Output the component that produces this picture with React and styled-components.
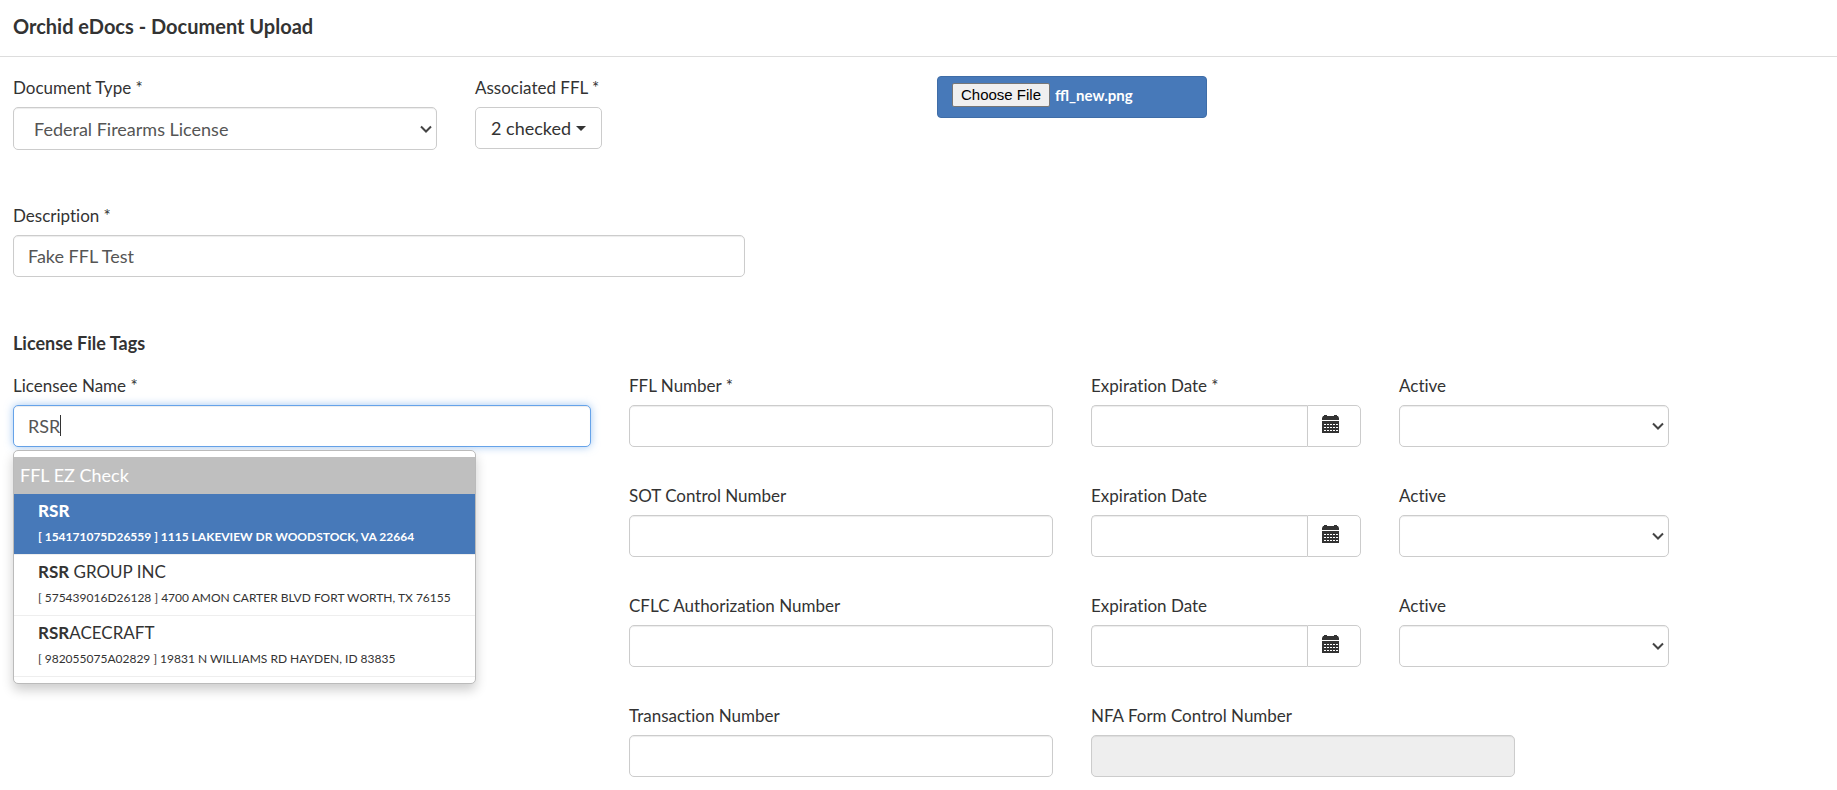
import React, { useState } from "react"
import styled, { createGlobalStyle, css } from "styled-components"

const GlobalStyle = createGlobalStyle`
  *,
  *::before,
  *::after {
    box-sizing: border-box;
  }
  body {
    margin: 0;
    background: #fff;
    color: #333;
    font-family: Lato, "Open Sans", "Liberation Sans", sans-serif;
    font-size: 17px;
    font-variant-ligatures: none;
    line-height: 24px;
  }
  button,
  input,
  select {
    font: inherit;
  }
`

const Header = styled.header`
  padding: 12px 13px 16px;
  border-bottom: 1px solid #ddd;
  h1 {
    margin: 0;
    font-size: 20px;
    font-weight: 700;
    line-height: 28px;
  }
`

const Form = styled.form`
  padding: 19px 14px 10px 13px;
`

const Row = styled.div`
  display: grid;
  grid-template-columns: repeat(12, minmax(0, 1fr));
  column-gap: 38px;
  margin-bottom: ${(props) => (props.$last ? 0 : props.$loose ? 54 : 37)}px;
`

const Column = styled.div`
  position: relative;
  grid-column: ${(props) => (props.$start ? `${props.$start} / ` : "")} span
    ${(props) => props.$span};
`

const Label = styled.label`
  display: block;
  margin-bottom: 7px;
`

const SectionTitle = styled.h2`
  margin: 0 0 19px;
  font-size: 18px;
  font-weight: 700;
  line-height: 24px;
`

const control = css`
  display: block;
  width: 100%;
  height: 42px;
  border: 1px solid #ccc;
  border-radius: 5px;
  background: #fff;
  color: #555;
  font-size: 18px;
  box-shadow: inset 0 1px 1px rgba(0, 0, 0, 0.075);
`

const Input = styled.input`
  ${control}
  padding: 0 14px;
  &:disabled {
    background: #eee;
  }
`

const SearchInput = styled(Input)`
  border-color: #66a3e9;
  outline: 0;
  caret-color: transparent;
  box-shadow: inset 0 1px 1px rgba(0, 0, 0, 0.075),
    0 0 9px rgba(102, 163, 233, 0.6);
`

const SearchBox = styled.div`
  position: relative;
`

const Caret = styled.span`
  position: absolute;
  top: 10px;
  left: 47px;
  width: 1px;
  height: 21px;
  background: #333;
`

const SelectBox = styled.div`
  display: grid;
  align-items: center;
  > * {
    grid-area: 1 / 1;
  }
  svg {
    justify-self: end;
    margin-right: 5px;
    pointer-events: none;
  }
`

const SelectControl = styled.select`
  ${control}
  height: ${(props) => (props.$tall ? 43 : 42)}px;
  padding: 0 20px;
  appearance: none;
`

const CheckedButton = styled.button`
  display: flex;
  align-items: center;
  gap: 5px;
  height: 42px;
  padding: 0 15px;
  border: 1px solid #ccc;
  border-radius: 5px;
  background: #fff;
  color: #333;
  font-size: 18px;
  &::after {
    content: "";
    border-top: 5px solid;
    border-right: 5px solid transparent;
    border-left: 5px solid transparent;
  }
`

const FileBox = styled.label`
  display: flex;
  align-items: center;
  height: 42px;
  padding: 0 14px 4px;
  border: 1px solid #3f6da7;
  border-radius: 4px;
  background: #4779b9;
  color: #fff;
  font-size: 15px;
  font-variant-ligatures: normal;
  font-weight: 700;
  input {
    position: absolute;
    width: 1px;
    height: 1px;
    opacity: 0;
  }
`

const FileButton = styled.span`
  margin-right: 5px;
  padding: 0 8px;
  border: 1px solid #767676;
  border-radius: 2px;
  background: #efefef;
  color: #000;
  font-family: "Liberation Sans", Arial, sans-serif;
  font-size: 15px;
  font-weight: 400;
  line-height: 22px;
`

const DateGroup = styled.div`
  display: flex;
  ${Input} {
    flex: 1;
    min-width: 0;
    border-right: 0;
    border-radius: 5px 0 0 5px;
  }
`

const CalendarButton = styled.button`
  width: 54px;
  height: 42px;
  padding: 0 0 4px 14px;
  border: 1px solid #ccc;
  border-radius: 0 5px 5px 0;
  background: #fff;
  color: #333;
  svg {
    display: block;
  }
`

const Menu = styled.ul`
  position: absolute;
  z-index: 10;
  top: 76px;
  left: 0;
  width: 463px;
  margin: 0;
  padding: 6px 0;
  border: 1px solid #bbb;
  border-radius: 5px;
  background: #fff;
  box-shadow: 0 6px 12px rgba(0, 0, 0, 0.2);
  list-style: none;
`

const MenuHeader = styled.li`
  padding: 6px 6px 7px;
  background: #bfbfbf;
  color: #fff;
  font-size: 18px;
`

const MenuItem = styled.li`
  padding: 5px 24px;
  border-bottom: 1px solid #eee;
  white-space: nowrap;
  small {
    display: block;
    padding-top: 2px;
    font-size: 12px;
  }
  ${(props) =>
    props.$active &&
    css`
      background: #4779b9;
      color: #fff;
      font-weight: 700;
    `}
`

const CalendarIcon = () => (
  <svg width="18" height="18" viewBox="0 0 18 18" aria-hidden="true">
    <path
      fill="currentColor"
      d="M0 5V3l1-2h1V0h3v1h7V0h3v1h1l1 2v2zM0 6h17v12H0z"
    />
    <path
      stroke="#fff"
      strokeDasharray="2 1"
      d="M2 9.5h14M2 12.5h14M2 15.5h14"
    />
  </svg>
)

const Select = ({ children, ...props }) => (
  <SelectBox>
    <SelectControl {...props}>{children}</SelectControl>
    <svg width="12" height="8" viewBox="0 0 12 8" aria-hidden="true">
      <path d="M1 1.5l5 5 5-5" fill="none" stroke="#444" strokeWidth="2" />
    </svg>
  </SelectBox>
)

const licensees = [
  {
    match: "RSR",
    rest: "",
    detail: "[ 154171075D26559 ] 1115 LAKEVIEW DR WOODSTOCK, VA 22664",
  },
  {
    match: "RSR",
    rest: " GROUP INC",
    detail: "[ 575439016D26128 ] 4700 AMON CARTER BLVD FORT WORTH, TX 76155",
  },
  {
    match: "RSR",
    rest: "ACECRAFT",
    detail: "[ 982055075A02829 ] 19831 N WILLIAMS RD HAYDEN, ID 83835",
  },
]

const ExpirationFields = ({ id, required }) => (
  <>
    <Column $span={2}>
      <Label htmlFor={`${id}-expiration`}>
        Expiration Date{required && " *"}
      </Label>
      <DateGroup>
        <Input id={`${id}-expiration`} />
        <CalendarButton type="button" aria-label="Pick a date">
          <CalendarIcon />
        </CalendarButton>
      </DateGroup>
    </Column>
    <Column $span={2}>
      <Label htmlFor={`${id}-active`}>Active</Label>
      <Select id={`${id}-active`} defaultValue="">
        <option value=""></option>
      </Select>
    </Column>
  </>
)

const App = () => {
  const [description, setDescription] = useState("Fake FFL Test")
  const [licensee, setLicensee] = useState("RSR")

  return (
    <>
      <GlobalStyle />
      <Header>
        <h1>Orchid eDocs - Document Upload</h1>
      </Header>
      <Form>
        <Row $loose>
          <Column $span={3}>
            <Label htmlFor="document-type">Document Type *</Label>
            <Select id="document-type" $tall>
              <option>Federal Firearms License</option>
            </Select>
          </Column>
          <Column $span={3}>
            <Label htmlFor="associated-ffl">Associated FFL *</Label>
            <CheckedButton id="associated-ffl" type="button">
              2 checked
            </CheckedButton>
          </Column>
          <Column $span={2}>
            <FileBox>
              <input type="file" />
              <FileButton>Choose File</FileButton>
              ffl_new.png
            </FileBox>
          </Column>
        </Row>
        <Row $loose>
          <Column $span={5}>
            <Label htmlFor="description">Description *</Label>
            <Input
              id="description"
              value={description}
              onChange={(e) => setDescription(e.target.value)}
            />
          </Column>
        </Row>
        <SectionTitle>License File Tags</SectionTitle>
        <Row>
          <Column $span={4}>
            <Label htmlFor="licensee">Licensee Name *</Label>
            <SearchBox>
              <SearchInput
                id="licensee"
                autoComplete="off"
                value={licensee}
                onChange={(e) => setLicensee(e.target.value)}
              />
              <Caret />
            </SearchBox>
            <Menu>
              <MenuHeader>FFL EZ Check</MenuHeader>
              {licensees.map((item, index) => (
                <MenuItem key={item.detail} $active={index === 0}>
                  <strong>{item.match}</strong>
                  {item.rest}
                  <small>{item.detail}</small>
                </MenuItem>
              ))}
            </Menu>
          </Column>
          <Column $span={3}>
            <Label htmlFor="ffl-number">FFL Number *</Label>
            <Input id="ffl-number" />
          </Column>
          <ExpirationFields id="ffl" required />
        </Row>
        <Row>
          <Column $start={5} $span={3}>
            <Label htmlFor="sot-number">SOT Control Number</Label>
            <Input id="sot-number" />
          </Column>
          <ExpirationFields id="sot" />
        </Row>
        <Row>
          <Column $start={5} $span={3}>
            <Label htmlFor="cflc-number">CFLC Authorization Number</Label>
            <Input id="cflc-number" />
          </Column>
          <ExpirationFields id="cflc" />
        </Row>
        <Row $last>
          <Column $start={5} $span={3}>
            <Label htmlFor="transaction-number">Transaction Number</Label>
            <Input id="transaction-number" />
          </Column>
          <Column $span={3}>
            <Label htmlFor="nfa-number">NFA Form Control Number</Label>
            <Input id="nfa-number" disabled />
          </Column>
        </Row>
      </Form>
    </>
  )
}

export default App
